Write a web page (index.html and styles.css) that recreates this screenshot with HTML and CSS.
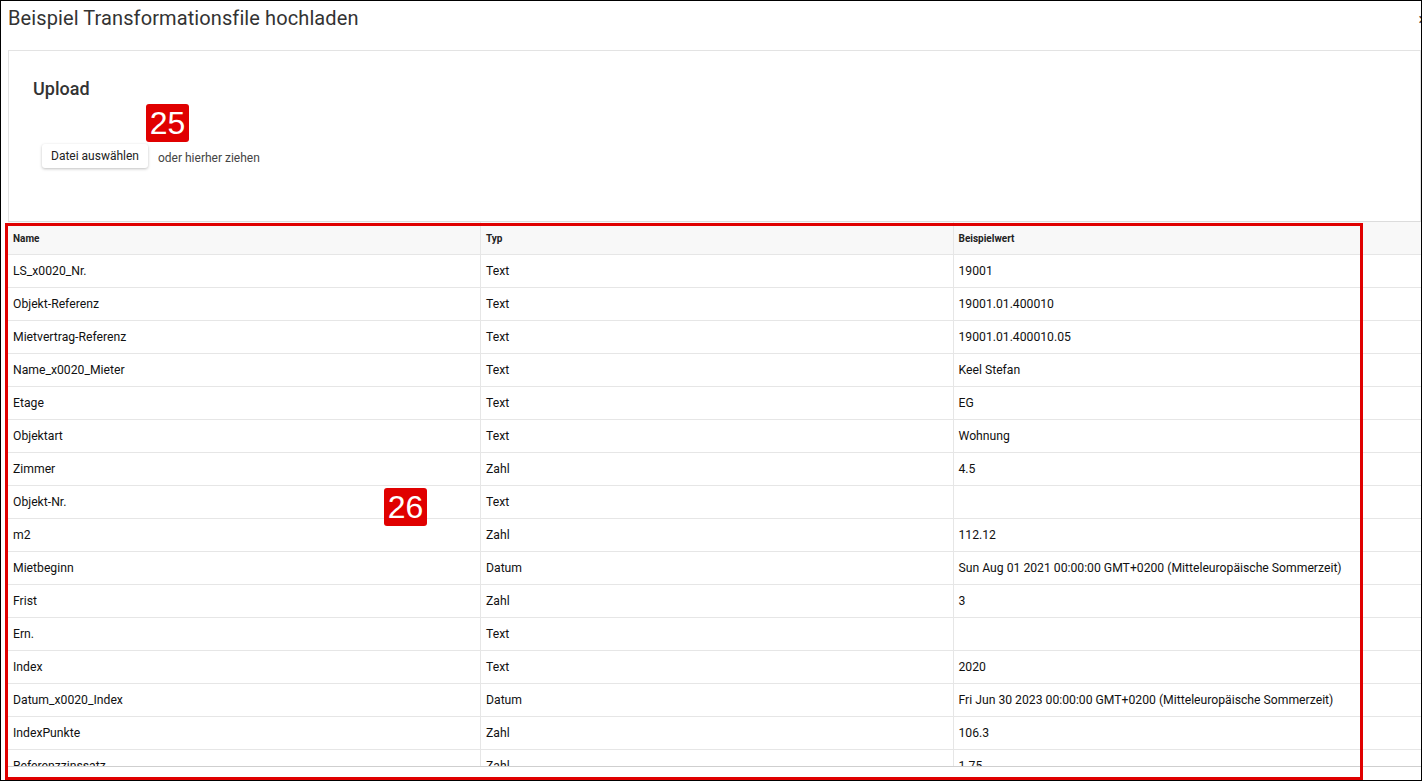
FILE: index.html
```html
<!DOCTYPE html>
<html lang="de">
<head>
    <meta charset="UTF-8">
    <title>Beispiel Transformationsfile hochladen</title>
    <link rel="stylesheet" href="styles.css">
</head>
<body>
    <div class="dialog">
        <div class="dialog-header">
            <h1>Beispiel Transformationsfile hochladen</h1>
            <span class="close">&times;</span>
        </div>

        <!-- Upload -->
        <div class="panel">
            <h2>Upload</h2>
            <div class="upload-row">
                <button class="file-btn">Datei auswählen</button>
                <span class="drop-hint">oder hierher ziehen</span>
            </div>
        </div>

        <!-- Preview table -->
        <div class="table-wrap">
            <table class="preview">
                <thead>
                    <tr><th>Name</th><th>Typ</th><th>Beispielwert</th></tr>
                </thead>
                <tbody>
                    <tr><td>LS_x0020_Nr.</td><td>Text</td><td>19001</td></tr>
                    <tr><td>Objekt-Referenz</td><td>Text</td><td>19001.01.400010</td></tr>
                    <tr><td>Mietvertrag-Referenz</td><td>Text</td><td>19001.01.400010.05</td></tr>
                    <tr><td>Name_x0020_Mieter</td><td>Text</td><td>Keel Stefan</td></tr>
                    <tr><td>Etage</td><td>Text</td><td>EG</td></tr>
                    <tr><td>Objektart</td><td>Text</td><td>Wohnung</td></tr>
                    <tr><td>Zimmer</td><td>Zahl</td><td>4.5</td></tr>
                    <tr><td>Objekt-Nr.</td><td>Text</td><td></td></tr>
                    <tr><td>m2</td><td>Zahl</td><td>112.12</td></tr>
                    <tr><td>Mietbeginn</td><td>Datum</td><td>Sun Aug 01 2021 00:00:00 GMT+0200 (Mitteleuropäische Sommerzeit)</td></tr>
                    <tr><td>Frist</td><td>Zahl</td><td>3</td></tr>
                    <tr><td>Ern.</td><td>Text</td><td></td></tr>
                    <tr><td>Index</td><td>Text</td><td>2020</td></tr>
                    <tr><td>Datum_x0020_Index</td><td>Datum</td><td>Fri Jun 30 2023 00:00:00 GMT+0200 (Mitteleuropäische Sommerzeit)</td></tr>
                    <tr><td>IndexPunkte</td><td>Zahl</td><td>106.3</td></tr>
                    <tr><td>Referenzzinssatz</td><td>Zahl</td><td>1.75</td></tr>
                </tbody>
            </table>
        </div>

        <!-- annotations -->
        <span class="badge badge-25">25</span>
        <div class="mark-box"></div>
        <span class="badge badge-26">26</span>
    </div>
</body>
</html>
```

FILE: styles.css
```css
body {
    margin: 0;
    font-family: Roboto, "Liberation Sans", Arial, sans-serif;
    background: #fff;
    color: #222;
}
.dialog {
    position: relative;
    height: 781px;
    box-sizing: border-box;
    border: 1px solid #000;
    overflow: hidden;
}
.dialog-header {
    display: flex;
    justify-content: space-between;
    align-items: flex-start;
    height: 49px;
    padding: 0 0 0 7px;
}
.dialog-header h1 {
    margin: 5px 0 0;
    font-size: 20px;
    font-weight: 400;
    letter-spacing: 0.1px;
    color: #333;
}
.close {
    font-size: 16px;
    margin: 9px -6px 0 0;
    color: #333;
}
.panel {
    margin-left: 7px;
    height: 170px;
    border-top: 1px solid #e3e3e3;
    border-left: 1px solid #e3e3e3;
    border-right: 1px solid #e3e3e3;
    padding: 0 0 0 24px;
}
.panel h2 {
    margin: 27px 0 0;
    font-size: 18px;
    font-weight: 500;
    color: #333;
}
.upload-row {
    display: flex;
    align-items: center;
    margin-top: 45px;
    margin-left: 9px;
}
.file-btn {
    font-family: inherit;
    font-size: 12px;
    color: #222;
    background: #fff;
    border: none;
    border-radius: 3px;
    padding: 0 9px;
    height: 24px;
    box-shadow: 0 1px 3px rgba(0, 0, 0, 0.25);
}
.drop-hint {
    font-size: 12px;
    color: #444;
    margin-left: 10px;
    padding-top: 4px;
}
.table-wrap {
    margin-left: 7px;
    height: 544px;
    overflow: hidden;
    border-top: 1px solid #dcdcdc;
    border-bottom: 1px solid #cfcfcf;
}
.preview {
    width: 1418px;
    border-collapse: collapse;
    table-layout: fixed;
}
.preview th, .preview td {
    height: 32px;
    padding: 0 0 0 5px;
    text-align: left;
    border-bottom: 1px solid #e6e6e6;
    border-right: 1px solid #e6e6e6;
    white-space: nowrap;
    overflow: hidden;
}
.preview th {
    background: #f8f8f8;
    font-size: 10px;
    font-weight: 700;
    color: #222;
}
.preview td {
    font-size: 12.2px;
    color: #111;
}
.badge {
    position: absolute;
    background: #e00000;
    color: #fff;
    font-family: "Liberation Sans", Arial, sans-serif;
    font-size: 32px;
    line-height: 38px;
    width: 43px;
    text-align: center;
    border-radius: 3px;
}
.badge-25 {
    left: 145px;
    top: 103px;
}
.badge-26 {
    left: 383px;
    top: 487px;
}
.mark-box {
    position: absolute;
    left: 4px;
    top: 222px;
    width: 1352px;
    height: 551px;
    border: 3px solid #e00000;
}
```
